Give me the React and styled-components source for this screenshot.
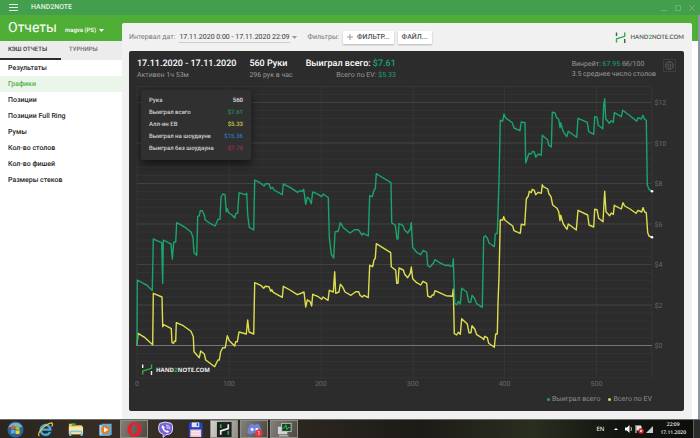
import React from "react";
import styled, { createGlobalStyle } from "styled-components";

const Global = createGlobalStyle`
  * { box-sizing: border-box; }
  body {
    margin: 0;
    background: #fff;
    font-family: Roboto, "Noto Sans", sans-serif;
    text-rendering: geometricPrecision;
  }
  button { font-family: inherit; border: 0; background: none; padding: 0; margin: 0; cursor: pointer; text-rendering: inherit; }
  h1, h2, p, ul, dl, dd, dt { margin: 0; padding: 0; }
  a { text-decoration: none; color: inherit; }
`;

const GREEN = "#19a56c";
const YELLOW = "#dede4e";

const Page = styled.div`
  display: flex;
  flex-direction: column;
  min-height: 100vh;
`;

const TitleBar = styled.header`
  display: flex;
  align-items: center;
  height: 15px;
  padding: 0 4px 0 9px;
  background: #439e4d;
  color: #e2f2e2;
`;

const AppName = styled.span`
  margin-left: 13px;
  flex: 1;
  font-size: 7px;
  line-height: 15px;
  font-weight: 500;
`;

const IconButton = styled.button`
  display: flex;
  color: inherit;
`;

const WindowButtons = styled.div`
  display: flex;
  gap: 6px;
  color: #6cb274;
`;

const Workspace = styled.div`
  flex: 1;
  display: grid;
  grid-template-columns: 122px minmax(0, 1fr);
  padding-right: 6px;
  border-right: 2px solid #8d98a5;
  background: linear-gradient(#4fae36 26px, #fff 26px);
`;

const Sidebar = styled.aside`
  background: #fff;
`;

const SideHead = styled.div`
  display: flex;
  align-items: center;
  gap: 8px;
  height: 26px;
  padding-left: 8px;
  background: #4fae36;
  color: #fff;
`;

const Title = styled.h1`
  font-size: 14px;
  line-height: 26px;
  font-weight: 400;
`;

const Account = styled.button`
  display: flex;
  align-items: center;
  gap: 3px;
  padding-top: 4px;
  color: #fff;
  font-size: 6px;
  font-weight: 500;
`;

const Tabs = styled.div`
  display: grid;
  grid-template-columns: 1fr 1fr;
  height: 19px;
  background: #ececec;
`;

const Tab = styled.button`
  padding-left: 8px;
  text-align: left;
  font-size: 6px;
  font-weight: 500;
  color: ${(p) => (p.$active ? "#333" : "#6b6b6b")};
  border-bottom: 2px solid ${(p) => (p.$active ? "#2c2c2c" : "#ececec")};
`;

const Menu = styled.nav`
  display: flex;
  flex-direction: column;
`;

const MenuLink = styled.a`
  height: 16px;
  padding-left: 8px;
  font-size: 7px;
  line-height: 16px;
  font-weight: 500;
  color: ${(p) => (p.$active ? "#52b046" : "#252525")};
  background: ${(p) => (p.$active ? "#ebf6ea" : "transparent")};
`;

const Main = styled.main`
  display: flex;
  flex-direction: column;
  margin-top: 8px;
  padding: 0 8px 8px 7px;
  background: #f1f1f1;
  border-radius: 2px 2px 0 0;
`;

const Toolbar = styled.div`
  display: flex;
  align-items: center;
  height: 28px;
  font-size: 7px;
  color: #777;
`;

const DateRange = styled.button`
  display: flex;
  align-items: center;
  gap: 2px;
  margin: 0 11px 0 4px;
  font-size: 7px;
  color: #333;
  white-space: nowrap;
`;

const DateText = styled.span`
  line-height: 10px;
  border-bottom: 1px solid #ccc;
`;

const ToolButton = styled.button`
  display: flex;
  align-items: center;
  gap: 4px;
  height: 13px;
  margin-left: 4px;
  padding: 0 4px;
  border-radius: 1px;
  background: #fff;
  color: #555;
  font-size: 7px;
  font-weight: 500;
  box-shadow: 0 1px 2px rgba(0, 0, 0, 0.25);
`;

const Brand = styled.a`
  display: flex;
  align-items: center;
  gap: 4px;
  margin-left: auto;
  font-family: Lato, sans-serif;
  font-size: 6px;
  font-weight: 700;
  color: #666;
`;

const Accent = styled.span`
  color: ${(p) => p.$color};
`;

const Card = styled.section`
  position: relative;
  flex: 1;
  border-radius: 2px;
  background: #2c2c2c;
`;

const Summary = styled.div`
  display: flex;
  align-items: flex-start;
  gap: 13px;
  padding: 6px 8px 0 8px;
`;

const Stat = styled.div`
  text-align: ${(p) => p.$align || "left"};
  white-space: nowrap;
`;

const StatTitle = styled.h2`
  font-size: 9px;
  line-height: 14px;
  font-weight: 500;
  color: #fff;
`;

const StatNote = styled.p`
  font-size: 7px;
  line-height: ${(p) => (p.$loose ? 10 : 9)}px;
  color: #999;
`;

const Rates = styled.div`
  margin: 2px -6px 0 auto;
  white-space: nowrap;
`;

const Settings = styled.button`
  display: flex;
  align-items: center;
  justify-content: center;
  width: 13px;
  height: 13px;
  margin-top: 2px;
  border: 1px solid #3d3d3d;
  color: #666;
`;

const Chart = styled.svg`
  display: block;
  width: 100%;
  height: auto;
  font-family: Roboto, "Noto Sans", sans-serif;
`;

const Tooltip = styled.dl`
  position: absolute;
  left: 12px;
  top: 39px;
  width: 110px;
  padding: 5px 8px;
  border-radius: 2px;
  background: #303030;
  box-shadow: 0 4px 9px rgba(0, 0, 0, 0.55);
`;

const TipRow = styled.div`
  display: flex;
  justify-content: space-between;
  font-size: 6px;
  line-height: 12px;
  font-weight: 500;
  white-space: nowrap;
`;

const TipLabel = styled.dt`
  color: #d2d2d2;
`;

const TipValue = styled.dd`
  color: ${(p) => p.$color};
`;

const Legend = styled.ul`
  display: flex;
  justify-content: flex-end;
  gap: 8px;
  padding: 2px 32px 0 0;
  list-style: none;
  font-size: 7px;
  line-height: 10px;
  color: #8c8c8c;
`;

const LegendItem = styled.li`
  display: flex;
  align-items: center;
  gap: 2px;
  &::before {
    content: "";
    width: 3px;
    height: 3px;
    border-radius: 50%;
    background: ${(p) => p.$color};
  }
`;

const Taskbar = styled.footer`
  display: flex;
  align-items: stretch;
  height: 19px;
  border-top: 1px solid #6a6a66;
  background: linear-gradient(90deg, #2b241f, #372f27 18%, #2c2620 42%, #1d1b17 60%, #2a2e20 76%, #12150f 88%, #0c0e0b);
  color: #fff;
`;

const TaskButton = styled.button`
  display: flex;
  align-items: center;
  justify-content: center;
  width: ${(p) => (p.$open ? 28 : 30)}px;
  margin-right: ${(p) => (p.$open ? 2 : 0)}px;
  background: ${(p) =>
    p.$focused
      ? "linear-gradient(110deg, #d4d4ce, #8e8d86)"
      : p.$open
      ? "linear-gradient(110deg, #85817b, #4a453f)"
      : "transparent"};
  box-shadow: ${(p) => (p.$open ? "inset 0 0 0 1px #908c86" : "none")};
`;

const Tray = styled.div`
  display: flex;
  align-items: center;
  gap: 7px;
  margin-left: auto;
  font-family: "Noto Sans", sans-serif;
  font-size: 6px;
`;

const Clock = styled.time`
  font-size: 5px;
  line-height: 8px;
  font-weight: 500;
  text-align: center;
`;

const ShowDesktop = styled.button`
  align-self: stretch;
  width: 7px;
  background: #292c2a;
  border-left: 1px solid #5c5f5c;
`;

const MENU = ["Результаты", "Графики", "Позиции", "Позиции Full Ring", "Румы", "Кол-во столов", "Кол-во фишей", "Размеры стеков"];

const TIPS = [
  ["Рука", "560", "#e2e2e2"],
  ["Выиграл всего", "$7.61", "#24935f"],
  ["Алл-ин ЕВ", "$5.33", "#cccc45"],
  ["Выиграл на шоудауне", "$15.36", "#3179b8"],
  ["Выиграл без шоудауна", "-$7.75", "#a02f55"],
];

const TOTAL = `137,345.5 137.3,280 143.3,283.3 146.7,285 150,288.3 152.3,290.5 153.3,239 156.7,240.7 161.7,242.7 162.7,283.3
163.3,240 168.3,242.7 171,244 172.3,259 173.7,242.3 175.7,242 176.7,222.7 180,224.3 185,227.3 191,232 193,237.3 194,252.7
196.7,255.3 197.7,216.7 199.3,215.7 200.3,210.7 202,210.7 204,214 205.3,220 210,223.3 215,226 216.3,223.3 218,219.3 220,219.3
221,197.3 222.7,194 225,194.7 226.3,212 227.3,208.7 228.7,212.7 232.3,215.3 234.7,218 235.7,213.7 237.7,213 239,192.7
245,194.7 246.7,193.3 247.7,215 249.3,227.3 253.7,230 254.7,180 260,182.7 264,186 265.7,183.7 269,183.7 270.7,188.7
272.7,187.3 274,190 282.3,194.7 283.3,184 290,187.3 297.7,192.3 299.7,190.7 302,191.5 303.7,189.3 305.7,204.3 307.3,197.3
309.3,198.7 311.3,203.7 312.7,192 316.7,193.7 321.7,196.7 323.3,194 328.3,197.7 329.3,237.3 331.3,254.3 333.7,258 335,232
338.3,231 340.3,222.7 343.3,227.7 350,233 354.7,229.7 358.3,229.7 362,235 363.3,233.3 368.3,236 369.7,195.7 372.3,196.7
374,190 375.3,188.7 376.3,173.7 380,176 391,182.7 391.7,222.7 395.3,225.3 397,239 398,239 399,223.7 403,225.7 404.7,230
407.7,233 410.3,229 411.3,222.7 412.7,247.3 416.7,252.3 420.7,254.7 423.3,250.3 426.7,252.3 427.7,265.7 430,267 433.3,263.3
435,259.7 440,263 446,265.7 448.3,265 450,266.3 452.7,266 453.3,258.7 454.7,303.3 457,304.7 458.3,301.3 460.3,304
461.7,288.3 466.7,292 468.7,302 470.7,302.3 472,295.3 474.3,298 476.7,303.7 482.3,307.3 483.7,237.3 485.3,235.7 487.3,238
489,243 494.3,246.7 495.3,234 497.3,233.3 499,181.7 500.3,120.3 502.7,121 504,114 505.7,118 512.3,122.7 514,128 520,130.7
521.3,122 525,122.7 525.7,163 527.3,158.3 529,153.3 531,154 532.7,151.3 534.3,152 535.7,157 538.3,154 541.3,155.3
542.3,135.3 547.7,140 548.7,145 551.3,147 552.3,112.3 555,113 556.7,117.7 558.7,119.3 560,127.7 560.7,122.7 563.3,131.7
566.7,136.7 568.3,131.3 576.7,137.3 578,118.3 587.3,122.3 588.7,131.7 593.7,134.3 594.7,116.7 597,117.3 598.3,125.3
602.7,128.7 603.7,105 604.7,98.7 605.7,118.7 609.3,123.3 611.3,120.7 613.3,122.3 614.3,112.7 621.3,116.7 622.7,110.3
630,115.7 636.7,121.3 638,117.7 641.3,119 643,115.3 644.3,119 646.3,120.3 647.3,185 649,189.3 652,191.3`;

const EV = `137,345.5 138,333.3 145,337.7 152.7,344.7 153.3,293.3 162,297 162.7,326.7 163.7,324.7 171.3,328.7 172,342.7 173.7,343.3
174.3,341.3 175.7,341.3 176.3,322.7 183.3,325.7 191,331.3 193.3,336.7 194,351.7 199.3,357.7 200.7,351 204.3,354 205.7,360
214.7,366.7 216.3,363.3 218,360 219.3,360 220.7,351.7 222.7,347.7 225.3,347.7 227.3,335.7 229.3,340.7 234.7,346 235.7,341.7
237.3,341.7 239,332 246.3,334 247.7,320 249,332 253.7,334 254.7,282.7 260.7,285.3 263.7,288.3 265.3,286.3 269,286.7
270.7,291.3 271.7,289.7 273.3,292.3 282.3,297.3 283.3,286.3 290,290 297.3,294.7 301.7,293 304,292 305.7,307 307.3,300
310,301.3 311.7,306 312.7,294.3 318.3,296.7 321.7,299.3 323,297 328,300.3 329.3,290.3 333.3,292 334.7,271.7 335.7,293.3
339,292 340.3,284.3 342.7,287 345,292 351,295.3 355.7,291.7 358.7,291.7 360,295.3 362.3,297 364,295.3 368.3,297.7
369.7,265.3 372.7,266.7 374,260 375.3,258.3 376.3,243.7 390.7,252.7 391.3,266.7 395.7,270.3 396.7,283.3 398,283.3 399,268
403.3,270 404.7,274.3 407.7,277.7 410.3,273.3 411.3,267 412.7,278.7 416.7,282.7 420.7,285 423,281.3 426.7,283.3 427.7,296
430.7,297.3 432.3,295 433.7,295 435,290.7 446,295.7 452.3,296.3 453.3,289 454.3,333.7 456.7,335 458.3,332.3 460.3,334.3
461.7,318.7 467.3,324 469,332.7 471,332.7 472,325.7 474.7,329 476.7,334.7 482.7,338.3 483.7,339.7 484.7,336.3 487.3,337.7
488.7,343.3 494.3,347.3 495.7,334 497.3,334 498,303.3 499,276.7 500.3,220 502.7,220 503.7,216.7 505,220.3 512.7,226
514,230.7 520.3,233.3 521.3,224.3 524.7,225 526.3,199 528.3,196 529.3,191.3 531.3,192.7 532.3,189.3 534.3,190.3 535.7,194.7
538.3,192.3 541.3,193.3 542.3,184.7 543.3,186.7 547.7,189 549,194 551,196.7 552.7,205 557,208.3 558.7,211.7 560,220.7
560.7,215.3 563.3,224 567,229.3 568.3,224 576.3,230 578,210.3 587.7,215 589,225 593.7,227 594.7,209.3 597,209.7
598.7,218.3 603,221.7 604.7,191.3 606,211.7 609.7,215.7 611.3,213 613.3,214.3 614.3,205.3 621.3,209 623,202.7 624.7,206
630,209 636,213.3 638,210.3 641.7,212 643,207.7 644.7,212 646.3,212.7 647.7,232.7 649,236 652,237.3`;

const MINOR_LINES = Array.from({ length: 36 }, (_, i) => 94.4 + i * 8.1);

function Caret({ color = "currentColor" }) {
  return (
    <svg width="5" height="3" viewBox="0 0 5 3" aria-hidden="true">
      <path d="M0 0h5L2.5 3z" fill={color} />
    </svg>
  );
}

function HandMark({ side }) {
  return (
    <svg width="11" height="11" viewBox="0 0 11 11" fill="none" strokeWidth="1.4" aria-hidden="true">
      <path d="M1.5 .5v3.5M9.7 7v4" stroke={side} />
      <path d="M1.5 10.5V6.8L9.7 4.3V.5" stroke="#35ac48" />
    </svg>
  );
}

function WinChart() {
  return (
    <Chart viewBox="129 80 555 312" role="img" aria-label="Выиграл всего, Всего по EV">
      <g stroke="#343434">
        {MINOR_LINES.map((y) => (
          <path key={y} d={`M137 ${y}H652`} />
        ))}
        {[137, 229, 321, 413, 504.5, 596.5, 652].map((x) => (
          <path key={x} d={`M${x} 86.5V377.5`} />
        ))}
        <path d="M137 86.5H652" />
      </g>
      {[12, 10, 8, 6, 4, 2, 0].map((v) => (
        <g key={v}>
          <path d={`M137 ${345.5 - v * 20.25}H652`} stroke={v ? "#414141" : "#747474"} />
          <text x="654.5" y={348 - v * 20.25} fontSize="7" fill="#6a6a6a">{`$${v}`}</text>
        </g>
      ))}
      {[0, 100, 200, 300, 400, 500].map((v) => (
        <text key={v} x={137 + v * 0.919} y="386" fontSize="7" fill="#6a6a6a" textAnchor="middle">
          {v}
        </text>
      ))}
      <rect x="139" y="362" width="72" height="15" fill="#2c2c2c" />
      <polyline points={EV} fill="none" stroke={YELLOW} strokeWidth="1.4" strokeLinejoin="round" />
      <polyline points={TOTAL} fill="none" stroke={GREEN} strokeWidth="1.4" strokeLinejoin="round" />
      <circle cx="652" cy="191.3" r="1.3" fill="#fff" />
      <circle cx="652" cy="237.3" r="1.3" fill="#fff" />
      <g fill="none" strokeWidth="1.4">
        <path d="M142.7 364.5v3.5M151.5 371v4" stroke="#eee" />
        <path d="M142.7 374.5V371l8.8-2.7V364.5" stroke="#35ac48" />
      </g>
      <text x="156" y="372" fontSize="6" fontWeight="700" fill="#eee" fontFamily="Open Sans, sans-serif">
        HAND<tspan fill="#35ac48">2</tspan>NOTE.COM
      </text>
    </Chart>
  );
}

const icons = {
  "Пуск": (
    <>
      <circle cx="9" cy="9" r="8.5" fill="#2c6499" />
      <path d="M1.5 7a8 8 0 0 1 15 0q-7-2.5-15 0" fill="#9bc7e3" opacity=".75" />
      <path d="M4.3 5.3q2-1 4-.2v3.7q-2-.7-4 .2z" fill="#e45b2c" />
      <path d="M9 5.4q2 .8 4.4-.3v3.8q-2.4 1-4.4.2z" fill="#8dc63f" />
      <path d="M4.2 9.7q2-.9 4-.2v3.7q-2-.7-4 .2z" fill="#4fb4ea" />
      <path d="M9 9.7q2 .8 4.4-.2v3.7q-2.4 1-4.4.2z" fill="#fbcb3b" />
    </>
  ),
  "Internet Explorer": (
    <>
      <path d="M13.8 11.5A5.2 5.2 0 1 1 14.2 9.2H5" fill="none" stroke="#3caeea" strokeWidth="2.5" />
      <path d="M2.5 16Q0 14 5 8.5T15.5 2Q17.5 3 15.5 6" fill="none" stroke="#f1c232" strokeWidth="1.3" />
    </>
  ),
  "Проводник": (
    <>
      <path d="M2 3h5l1 1.5h8V14H2z" fill="#edc65d" />
      <path d="M5 2.5h4v3H5z" fill="#54a94b" />
      <path d="M2 6h15v8H2z" fill="#fbe7a2" />
      <path d="M3.5 16v-4q0-1 1-1h10q1 0 1 1v4" fill="none" stroke="#86c7e8" strokeWidth="2" />
    </>
  ),
  "Проигрыватель": (
    <>
      <path d="M2.5 4h11v11.5h-11z" fill="#a8d5ee" />
      <path d="M5 2.8h10.5v12L5 15.5z" fill="#61aeda" />
      <circle cx="9" cy="9.3" r="4.5" fill="#ef7c1c" />
      <path d="m7.5 6.7 4.5 2.6-4.5 2.7z" fill="#fff" />
    </>
  ),
  Opera: (
    <path
      d="M9 1.200a7.500 7.800 0 1 0 0 15.600a7.500 7.800 0 1 0 0-15.600zM9 3.800a3.200 5.200 0 1 1 0 10.400a3.200 5.200 0 1 1 0-10.400z"
      fill="#e5202d"
      fillRule="evenodd"
    />
  ),
  Viber: (
    <>
      <path d="M3 2.5Q9-.3 15 2.5q2 1.5 1.5 6t-2.5 5q-2 1-4.500 1L6.5 17.5V14Q2 13 1.700 9T3 2.5z" fill="#7862dc" stroke="#e8e3fb" />
      <path d="M6 4.5q-1.5.5-1 2.5 1.5 4 5.5 5.5 1.5.3 2.3-1.3L10.8 9.8l-1 .7Q7.800 9.500 7.400 7.700l.8-.8z" fill="#fff" />
      <path d="M9.5 4.3q4 .2 4 4.200M9.700 6.200q2 .3 2 2.200" fill="none" stroke="#fff" strokeWidth=".8" />
    </>
  ),
  "Total Commander": (
    <>
      <path d="M2 1.5h13l1.5 1.5v14H2z" fill="#2544c5" />
      <path d="M5 1.5h8v5H5z" fill="#e4e5ed" />
      <path d="M10.3 2.3h1.5v3h-1.5z" fill="#2544c5" />
      <path d="M3.5 9H15v8H3.5z" fill="#f4c4cd" />
      <path d="M4.5 11.5H14M4.5 14H14" stroke="#fff" />
    </>
  ),
  Hand2Note: (
    <>
      <rect x="1" y="1" width="15.5" height="16" fill="#1d211f" />
      <path d="M5 3.5v4M13 10.5v4" stroke="#34a846" strokeWidth="1.8" />
      <path d="M5 14.5v-4L13 8V3.5" fill="none" stroke="#eee" strokeWidth="1.8" />
    </>
  ),
  Discord: (
    <>
      <path d="M4 4q2-1 3-1l.7 1h2.6L11 3q1 0 3 1 2.5 4 2.5 8.5-1.5 1.5-4 2l-1-1.5h-5l-1 1.5q-2.5-.5-4-2Q1.5 8 4 4z" fill="#6f86e0" />
      <circle cx="6.5" cy="9" r="1.5" fill="#fff" />
      <circle cx="11.5" cy="9" r="1.5" fill="#fff" />
      <circle cx="13.5" cy="13" r="4" fill="#e5343c" />
      <text x="13.5" y="15.2" fontSize="6" textAnchor="middle" fill="#fff">1</text>
    </>
  ),
  "Монитор ресурсов": (
    <>
      <path d="M2 6h10v8H2z" fill="#ced5d2" />
      <path d="M5.5 2h11v9.5h-11z" fill="#b9c5bf" />
      <path d="M6.5 3h9v7.5h-9z" fill="#163e20" />
      <path d="m7 8 2-1 1.5-3 1 5 1.5-2h2" fill="none" stroke="#52dc60" strokeWidth=".8" />
      <path d="M4 14.5h8l2 2H2.5z" fill="#aab4af" />
    </>
  ),
};

const OPEN_APPS = ["Opera", "Hand2Note", "Discord", "Монитор ресурсов"];

export default function App() {
  return (
    <Page>
      <Global />
      <TitleBar>
        <IconButton aria-label="Меню">
          <svg width="9" height="7" viewBox="0 0 9 7" stroke="currentColor">
            <path d="M0 .5h9M0 3.5h9M0 6.5h9" />
          </svg>
        </IconButton>
        <AppName>HAND2NOTE</AppName>
        <WindowButtons>
          <IconButton aria-label="Свернуть">
            <svg width="8" height="8" viewBox="0 0 8 8" stroke="currentColor"><path d="M1 6.5h6" /></svg>
          </IconButton>
          <IconButton aria-label="Развернуть">
            <svg width="8" height="8" viewBox="0 0 8 8" stroke="currentColor" fill="none"><path d="M1.5 1.5h5v5h-5z" /></svg>
          </IconButton>
          <IconButton aria-label="Закрыть">
            <svg width="8" height="8" viewBox="0 0 8 8" stroke="currentColor"><path d="m1 1 6 6M7 1 1 7" /></svg>
          </IconButton>
        </WindowButtons>
      </TitleBar>

      <Workspace>
        <Sidebar>
          <SideHead>
            <Title>Отчеты</Title>
            <Account>magva (PS) <Caret /></Account>
          </SideHead>
          <Tabs role="tablist">
            <Tab role="tab" aria-selected="true" $active>КЭШ ОТЧЕТЫ</Tab>
            <Tab role="tab" aria-selected="false">ТУРНИРЫ</Tab>
          </Tabs>
          <Menu>
            {MENU.map((name) => (
              <MenuLink key={name} href="#" $active={name === "Графики"}>{name}</MenuLink>
            ))}
          </Menu>
        </Sidebar>

        <Main>
          <Toolbar>
            <span>Интервал дат:</span>
            <DateRange>
              <DateText>17.11.2020 0:00 - 17.11.2020 22:09</DateText>
              <Caret color="#999" />
            </DateRange>
            <span>Фильтры:</span>
            <ToolButton>
              <svg width="6" height="6" viewBox="0 0 6 6" stroke="#999" aria-hidden="true"><path d="M3 0v6M0 3h6" /></svg>
              ФИЛЬТР...
            </ToolButton>
            <ToolButton>ФАЙЛ...</ToolButton>
            <Brand href="#">
              <HandMark side="#555" />
              <span>HAND<Accent $color="#35ac48">2</Accent>NOTE.COM</span>
            </Brand>
          </Toolbar>

          <Card>
            <Summary>
              <Stat>
                <StatTitle>17.11.2020 - 17.11.2020</StatTitle>
                <StatNote>Активен 1ч 53м</StatNote>
              </Stat>
              <Stat>
                <StatTitle>560 Руки</StatTitle>
                <StatNote>296 рук в час</StatNote>
              </Stat>
              <Stat $align="right">
                <StatTitle>Выиграл всего: <Accent $color={GREEN}>$7.61</Accent></StatTitle>
                <StatNote>Всего по EV: <Accent $color={GREEN}>$5.33</Accent></StatNote>
              </Stat>
              <Rates>
                <StatNote $loose>Винрейт: <Accent $color={GREEN}>67.95</Accent> бб/100</StatNote>
                <StatNote $loose>3.5 среднее число столов</StatNote>
              </Rates>
              <Settings aria-label="Настройки">
                <svg width="9" height="9" viewBox="0 0 9 9" fill="none" stroke="currentColor" strokeWidth=".8">
                  <path d="M3.7.5h1.6l.3 1.2 1.2-.6 1.1 1.1-.6 1.2 1.2.3v1.6l-1.2.3.6 1.2-1.1 1.1-1.2-.6-.3 1.2H3.7l-.3-1.2-1.2.6-1.1-1.1.6-1.2L.5 5.3V3.7l1.2-.3-.6-1.2 1.1-1.1 1.2.6z" />
                  <circle cx="4.5" cy="4.5" r="1.5" />
                </svg>
              </Settings>
            </Summary>
            <WinChart />
            <Tooltip>
              {TIPS.map(([label, value, color]) => (
                <TipRow key={label}>
                  <TipLabel>{label}</TipLabel>
                  <TipValue $color={color}>{value}</TipValue>
                </TipRow>
              ))}
            </Tooltip>
            <Legend>
              <LegendItem $color={GREEN}>Выиграл всего</LegendItem>
              <LegendItem $color={YELLOW}>Всего по EV</LegendItem>
            </Legend>
          </Card>
        </Main>
      </Workspace>

      <Taskbar>
        {Object.entries(icons).map(([name, art]) => (
          <TaskButton
            key={name}
            aria-label={name}
            $open={OPEN_APPS.includes(name)}
            $focused={name === "Hand2Note"}
          >
            <svg width="17" height="17" viewBox="0 0 18 18">{art}</svg>
          </TaskButton>
        ))}
        <Tray>
          <span>EN</span>
          <svg width="42" height="10" viewBox="0 0 42 10" aria-hidden="true">
            <path d="M3 6h4L5 4z" fill="#fff" />
            <path d="M14 3.5h2L18.5 1v8L16 6.5h-2z" fill="#fff" />
            <path d="M20 3q1 2 0 4" stroke="#bbb" fill="none" />
            <path d="M25 1v8M26 2h4v4h-4z" stroke="#eee" fill="#ddd" />
            <circle cx="30" cy="7" r="2.7" fill="#d92b2b" />
            <path d="m29 6 2 2m0-2-2 2" stroke="#fff" strokeWidth=".7" />
            <path d="M35 9h7V2z" fill="#ccc" />
          </svg>
          <Clock>22:09<br />17.11.2020</Clock>
          <ShowDesktop aria-label="Свернуть все окна" />
        </Tray>
      </Taskbar>
    </Page>
  );
}
